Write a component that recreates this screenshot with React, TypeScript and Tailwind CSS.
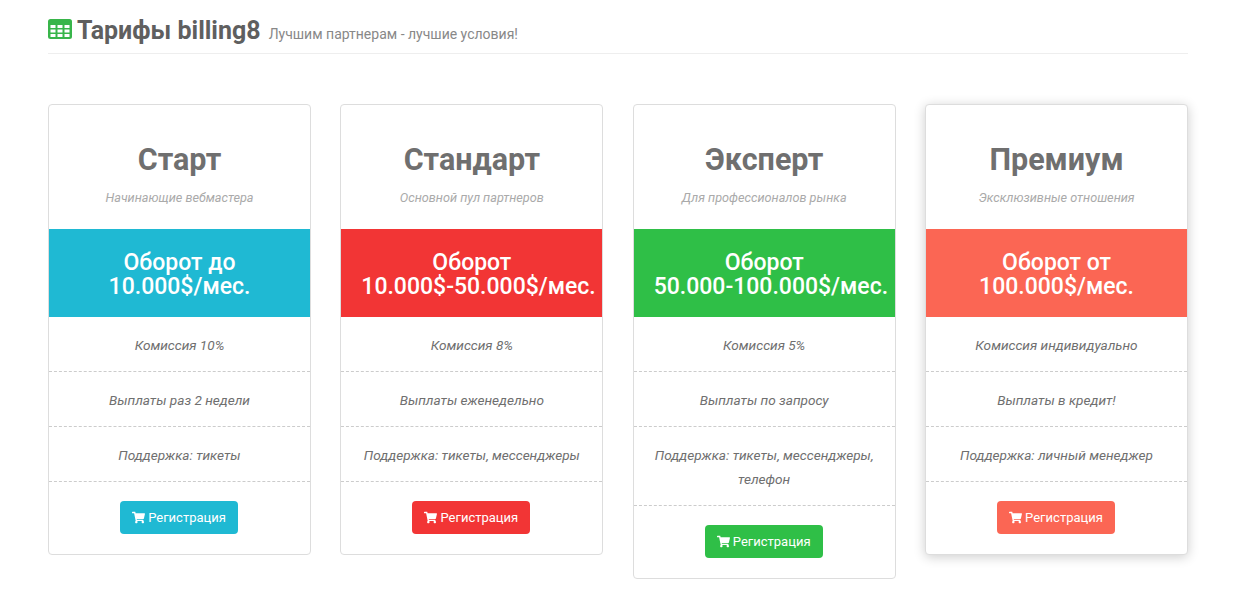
import { FaShoppingCart } from "react-icons/fa";

type Plan = {
  name: string;
  tagline: string;
  turnover: [string, string];
  rows: string[];
  headerClass: string;
  buttonClass: string;
  shadow?: boolean;
};

const plans: Plan[] = [
  {
    name: "Старт",
    tagline: "Начинающие вебмастера",
    turnover: ["Оборот до", "10.000$/мес."],
    rows: ["Комиссия 10%", "Выплаты раз 2 недели", "Поддержка: тикеты"],
    headerClass: "bg-[#1fb9d3]",
    buttonClass: "bg-[#1fb9d3]",
  },
  {
    name: "Стандарт",
    tagline: "Основной пул партнеров",
    turnover: ["Оборот", "10.000$-50.000$/мес."],
    rows: ["Комиссия 8%", "Выплаты еженедельно", "Поддержка: тикеты, мессенджеры"],
    headerClass: "bg-[#f23535]",
    buttonClass: "bg-[#f23535]",
  },
  {
    name: "Эксперт",
    tagline: "Для профессионалов рынка",
    turnover: ["Оборот", "50.000-100.000$/мес."],
    rows: ["Комиссия 5%", "Выплаты по запросу", "Поддержка: тикеты, мессенджеры, телефон"],
    headerClass: "bg-[#2fbf47]",
    buttonClass: "bg-[#2fbf47]",
  },
  {
    name: "Премиум",
    tagline: "Эксклюзивные отношения",
    turnover: ["Оборот от", "100.000$/мес."],
    rows: ["Комиссия индивидуально", "Выплаты в кредит!", "Поддержка: личный менеджер"],
    headerClass: "bg-[#fb6654]",
    buttonClass: "bg-[#fb6654]",
    shadow: true,
  },
];

function TableIcon() {
  const cols = [2.5, 9.5, 16.5];
  const rows = [6, 10.5, 15];
  return (
    <svg viewBox="0 0 24 20" className="mb-[8px] mr-[5px] h-[20px] w-[24px] shrink-0">
      <rect width="24" height="20" rx="2.5" fill="#38b54a" />
      {rows.map((y) =>
        cols.map((x) => <rect key={`${x}-${y}`} x={x} y={y} width="5" height="3" fill="#fff" />),
      )}
    </svg>
  );
}

function PlanCard({ plan }: { plan: Plan }) {
  return (
    <div
      className={
        plan.shadow
          ? "rounded border border-[#dddddd] bg-white shadow-[0_2px_12px_rgba(0,0,0,0.2)]"
          : "rounded border border-[#dddddd] bg-white"
      }
    >
      <div className="h-[124px] pt-[38px] text-center">
        <h3 className="text-[30.5px] font-bold leading-[33px] text-[#6f6f6f]">{plan.name}</h3>
        <p className="mt-[10px] text-[12.7px] italic leading-[24px] text-[#aaaaaa]">{plan.tagline}</p>
      </div>
      <div className={`${plan.headerClass} h-[88px] whitespace-nowrap px-5 pt-[22px] text-center text-[23px] font-medium leading-[24px] text-white`}>
        {plan.turnover[0]}
        <br />
        {plan.turnover[1]}
      </div>
      {plan.rows.map((row) => (
        <div
          key={row}
          className="border-b border-dashed border-[#cccccc] px-[18px] pb-[14px] pt-[16px] text-center text-[13.6px] italic leading-[24px] text-[#6f6f6f]"
        >
          {row}
        </div>
      ))}
      <div className="flex justify-center pb-5 pr-px pt-[19px]">
        <button className={`${plan.buttonClass} flex h-[33px] w-[118px] items-center justify-center gap-[3px] rounded text-[13px] text-white`}>
          <FaShoppingCart className="h-[13px] w-[13px]" />
          Регистрация
        </button>
      </div>
    </div>
  );
}

export default function App() {
  return (
    <div className="min-h-[594px] bg-white pl-12 pr-[49px] pt-[14px] font-['Roboto',sans-serif]">
      <div className="flex h-[40px] items-end border-b border-[#eeeeee] pb-[6px]">
        <TableIcon />
        <h1 className="text-[25px] font-bold leading-[33px] text-[#5f5f5f]">Тарифы billing8</h1>
        <span className="mb-[3px] ml-[8px] text-[14px] leading-[20px] text-[#888888]">Лучшим партнерам - лучшие условия!</span>
      </div>
      <div className="mt-[50px] grid grid-cols-4 items-start gap-[29.33px]">
        {plans.map((plan) => (
          <PlanCard key={plan.name} plan={plan} />
        ))}
      </div>
    </div>
  );
}
